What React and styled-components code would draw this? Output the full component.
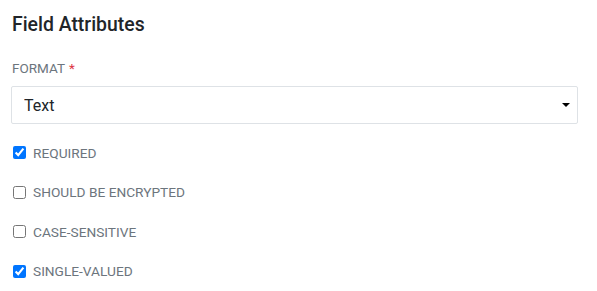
import React from "react";
import styled, { createGlobalStyle } from "styled-components";

const GlobalStyle = createGlobalStyle`
  body {
    margin: 0;
    background: #fff;
    font-family: Roboto, "Liberation Sans", sans-serif;
    color: #212529;
  }
`;

const Panel = styled.div`
  display: flex;
  flex-direction: column;
  padding: 13px 19px 0 11px;
`;

const Title = styled.h3`
  margin: 0 0 0 1px;
  font-size: 19.4px;
  line-height: 24px;
  font-weight: 500;
  color: #212529;
`;

const Label = styled.label`
  margin: 22px 0 0 1px;
  font-size: 13.5px;
  line-height: 19px;
  color: #6c757d;
  text-transform: uppercase;
`;

const Required = styled.span`
  color: #dc3545;
  margin-left: 4px;
`;

const SelectWrap = styled.div`
  position: relative;
  margin-top: 8px;
`;

const Select = styled.select`
  appearance: none;
  width: 100%;
  height: 38px;
  box-sizing: border-box;
  padding: 0 30px 0 12px;
  border: 1px solid #dee2e6;
  border-radius: 2px;
  background: #fff;
  font-family: inherit;
  font-size: 16px;
  color: #212529;
  outline: none;
`;

const Caret = styled.span`
  position: absolute;
  right: 8px;
  top: 17px;
  width: 0;
  height: 0;
  border-left: 4px solid transparent;
  border-right: 4px solid transparent;
  border-top: 4px solid #000;
  pointer-events: none;
`;

const Options = styled.div`
  display: flex;
  flex-direction: column;
  margin-top: 9px;
`;

const Check = styled.label`
  display: flex;
  align-items: center;
  height: 39.5px;
  font-size: 13.7px;
  color: #6c757d;
  text-transform: uppercase;
`;

const Box = styled.input`
  width: 13px;
  height: 13px;
  margin: 0 7px 0 2px;
  accent-color: #0075ff;
`;

const fields = [
  { name: "Required", checked: true },
  { name: "Should be encrypted", checked: false },
  { name: "Case-sensitive", checked: false },
  { name: "Single-valued", checked: true },
];

export default function App() {
  return (
    <>
      <GlobalStyle />
      <Panel>
        <Title>Field Attributes</Title>
        <Label>
          Format<Required>*</Required>
        </Label>
        <SelectWrap>
          <Select defaultValue="text">
            <option value="text">Text</option>
            <option value="number">Number</option>
          </Select>
          <Caret />
        </SelectWrap>
        <Options>
          {fields.map((f) => (
            <Check key={f.name}>
              <Box type="checkbox" defaultChecked={f.checked} />
              {f.name}
            </Check>
          ))}
        </Options>
      </Panel>
    </>
  );
}
